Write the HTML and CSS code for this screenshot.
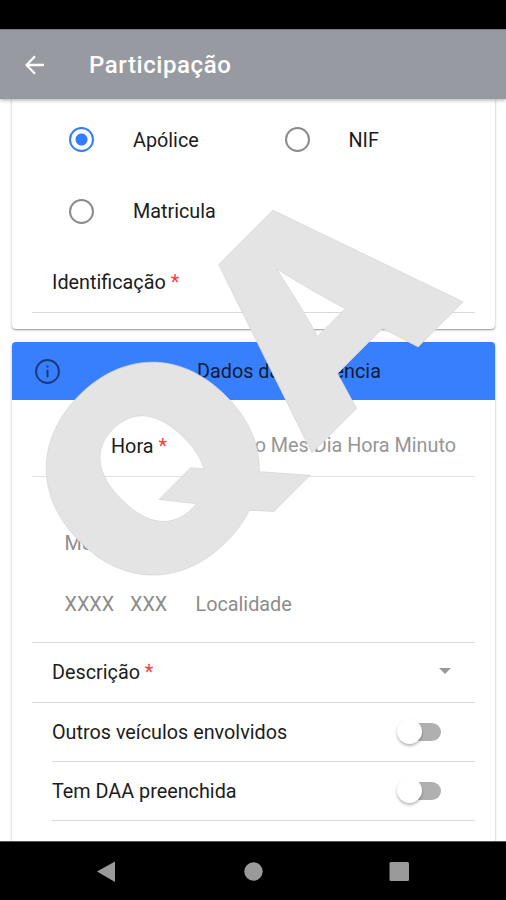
FILE: index.html
```
<!DOCTYPE html>
<html lang="pt">
<head>
<meta charset="utf-8">
<title>Participação</title>
<link rel="stylesheet" href="styles.css">
</head>
<body>
<div class="screen">
  <div class="statusbar"></div>
  <header class="toolbar">
    <svg class="back" viewBox="0 0 20 20"><path d="M19 10H2M10 1.3 1.5 10l8.500 8.700" fill="none" stroke="#fff" stroke-width="2.3"/></svg>
    <h1>Participação</h1>
  </header>
  <main class="content">
    <section class="card first">
      <div class="radios">
        <label class="radio"><i class="dot on"></i><span>Apólice</span></label>
        <label class="radio"><i class="dot"></i><span>NIF</span></label>
        <label class="radio"><i class="dot"></i><span>Matricula</span></label>
      </div>
      <div class="row ident"><span>Identificação <b>*</b></span></div>
    </section>
    <section class="card second">
      <div class="card-head">
        <svg class="info" viewBox="0 0 24 24"><circle cx="12" cy="12" r="11" fill="none" stroke="#173a78" stroke-width="1.800"/><path d="M12 10.300v7.200M12 6.200v2" stroke="#173a78" stroke-width="1.900"/></svg>
        <span>Dados da Ocorrência</span>
      </div>
      <div class="row date"><div class="when"><span class="day">Data</span><span>Hora <b>*</b></span></div><span class="hint">Ano Mes Dia Hora Minuto</span></div>
      <div class="row address">
        <span class="hint">Morada</span>
        <div class="postal hint"><span class="p4">XXXX</span><span class="p3">XXX</span><span>Localidade</span></div>
      </div>
      <div class="row descr"><span>Descrição <b>*</b></span><i class="caret"></i></div>
      <div class="row inset t1"><span>Outros veículos envolvidos</span><i class="toggle"></i></div>
      <div class="row inset t2"><span>Tem DAA preenchida</span><i class="toggle"></i></div>
    </section>
  </main>
  <nav class="navbar">
    <svg viewBox="0 0 506 58"><path d="M97 29.500 115 19.500V40Z"/><circle cx="253.500" cy="29.500" r="9.200"/><rect x="389.500" y="20" width="19.500" height="19" rx="1.500"/></svg>
  </nav>
  <svg class="watermark" viewBox="0 0 506 900"><text class="mark-q" transform="rotate(-45) scale(1.05 1)" x="-320.5" y="540.5">Q</text><text class="mark-a" transform="rotate(-45) scale(1.04 1)" x="-102" y="541">A</text></svg>
</div>
</body>
</html>
```
FILE: styles.css
```
* { box-sizing: border-box; }
body { margin: 0; background: #fff; font: 19.8px/24px Roboto, "Liberation Sans", sans-serif; color: #1c1c1c; }
.screen { position: relative; width: 506px; height: 900px; overflow: hidden; display: flex; flex-direction: column; }
.statusbar { height: 29px; background: #000; flex: none; }
.toolbar { height: 70px; flex: none; background: #989aa2; border-top: 1px solid #77797f; display: flex; align-items: center; padding-left: 25px; box-shadow: 0 1px 4px rgba(0,0,0,.35); z-index: 1; }
.back { width: 20px; height: 20px; margin-right: 44px; }
h1 { margin: 0; font-size: 24px; line-height: 30px; font-weight: 500; color: #fff; letter-spacing: .58px; }
.content { height: 742px; flex: none; overflow: hidden; padding: 0 11px 0 12px; }
.card { background: #fff; box-shadow: 0 1px 3px rgba(0,0,0,.25), 0 1px 1px rgba(0,0,0,.22); }
.first { height: 230px; border-radius: 0 0 4px 4px; padding: 5px 20px 0; margin-bottom: 13px; }
.radios { display: grid; grid-template-columns: 215.500px 1fr; grid-auto-rows: 71.500px; padding-left: 37px; }
.radio { display: flex; align-items: center; gap: 39px; }
.radio > span, .row > span, .card-head > span { padding-top: 2px; }
.dot { width: 25px; height: 25px; border: 2px solid #8b8b8b; border-radius: 50%; flex: none; }
.dot.on { border-color: #327dff; background: radial-gradient(circle, #327dff 5.500px, transparent 6.500px); }
.row { display: flex; border-bottom: 1px solid #dadada; justify-content: space-between; align-items: center; }
b { color: #f53d3d; font-weight: 400; }
.ident { height: 66px; padding: 5px 20px 0; }
.second { height: 520px; border-radius: 4px 4px 0 0; }
.card-head { height: 58px; background: #387ffe; border-radius: 4px 4px 0 0; display: flex; align-items: center; padding-left: 22.500px; color: #0d1c36; }
.info { width: 25px; height: 25px; margin-right: 137.500px; }
.second .row { margin: 0 20px; }
.date { height: 76.500px; padding: 15px 19px 0 20px; border-bottom-color: #e2e2e2; }
.when { display: flex; padding-top: 3px; }
.day { width: 59px; }
.hint { color: #969696; }
.second .address { height: 166px; padding: 53px 32px 0 32.500px; flex-direction: column; align-items: flex-start; justify-content: flex-start; }
.address .hint { color: #8c8c8c; }
.postal { display: flex; margin-top: 37px; }
.p4 { width: 65.5px; } .p3 { width: 65.5px; }
.descr { height: 60.500px; padding: 0 24px 0 20px; }
.caret { border: 6px solid transparent; border-top-color: #9a9a9a; border-bottom: 0; margin-top: -2px; }
.second .inset { margin-left: 40px; height: 59px; padding-right: 34px; }
.toggle { position: relative; width: 39px; height: 18px; border-radius: 9px; background: #b0b0b0; }
.toggle::before { content: ""; position: absolute; left: -5px; top: -4px; width: 25px; height: 25px; border-radius: 50%; background: #fff; box-shadow: 0 2px 3px rgba(0,0,0,.28); }
.navbar { height: 59px; background: #000; border-top: 1px solid #555; flex: none; z-index: 1; }
.navbar svg { display: block; width: 506px; height: 58px; fill: #9a9a9a; }
.watermark { position: absolute; left: 0; top: 0; width: 506px; height: 900px; z-index: 2; font: 900 274px Inter, sans-serif; fill: #e4e4e4; stroke: #d6d6d6; stroke-width: .7; pointer-events: none; }
.mark-q { font-size: 278px; }
```
